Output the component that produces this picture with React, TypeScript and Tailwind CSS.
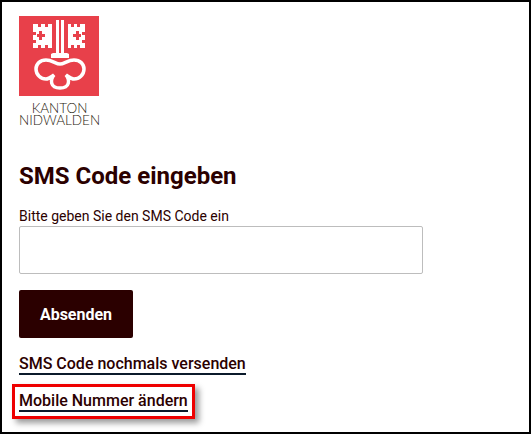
export default function App() {
  return (
    <div className="w-[531px] h-[434px] bg-black overflow-hidden p-[2px] font-['Roboto',sans-serif] text-[#2b0000]">
      <div className="w-[527px] h-[430px] bg-white pl-[17px] pt-[14px] flex flex-col items-start">
        <svg width="80" height="80" viewBox="0 0 80 80" className="block">
          <rect width="80" height="80" fill="#e8404a" />
          <g fill="#fff">
            <path fillRule="evenodd" d="M14 8h5v3h3V8h4v3h3V8h4v24h-4v-3h-3v3h-4v-3h-3v3h-5v-5h3v-3h-3v-5h3v-3h-3zM20 15v3h-2v3h2v3h3v-3h3v-3h-3v-3z" />
            <path fillRule="evenodd" d="M66 8h-5v3h-3V8h-3v3h-3V8h-3v24h3v-3h3v3h3v-3h3v3h5v-5h-3v-3h3v-5h-3v-3h3zM60 15v3h2v3h-2v3h-3v-3h-3v-3h3v-3z" />
            <rect x="37" y="4" width="3" height="34" />
            <rect x="42" y="4" width="3" height="34" />
            <path d="M34 37h14l2 1v4H32v-4z" />
          </g>
          <path d="M41 48C37 48 33 44 27 44C21 44 17 48 17 53C17 59 22 63 27 63C30 63 32 61 35 59C31 64 31 72 41 72C51 72 51 64 47 59C50 61 52 63 55 63C60 63 65 59 65 53C65 48 61 44 55 44C49 44 45 48 41 48Z" fill="none" stroke="#fff" strokeWidth="3.5" />
        </svg>
        <div className="w-[81px] mt-[6px] text-center font-['Lato',sans-serif] text-[13.5px] leading-[12px] text-[#1f1a0e] font-light whitespace-nowrap">
          <div>KANTON</div>
          <div>NIDWALDEN</div>
        </div>
        <h1 className="mt-[34px] text-[24px] leading-[32px] font-bold">SMS Code eingeben</h1>
        <label className="mt-[14px] text-[14px] leading-[20px]">Bitte geben Sie den SMS Code ein</label>
        <input className="w-[404px] h-[48px] border border-[#bdbdbd] rounded-[2px] bg-white" />
        <button className="mt-[16px] w-[114px] h-[48px] pt-[1px] bg-[#2b0000] rounded-[2px] text-white text-[16px] font-bold">Absenden</button>
        <a className="mt-[15px] pt-[2px] text-[16px] leading-[18px] font-medium border-b-2 border-[#0b1a2b]">SMS Code nochmals versenden</a>
        <div className="relative mt-[15px]">
          <a className="block pt-[2px] text-[16px] leading-[18px] font-medium border-b-2 border-[#0b1a2b]">Mobile Nummer ändern</a>
          <div className="absolute -left-[7px] -right-[7px] -top-[6px] -bottom-[7px] border-[3px] border-[#ee0000] shadow-[4px_4px_6px_rgba(0,0,0,0.4)]" />
        </div>
      </div>
    </div>
  );
}
